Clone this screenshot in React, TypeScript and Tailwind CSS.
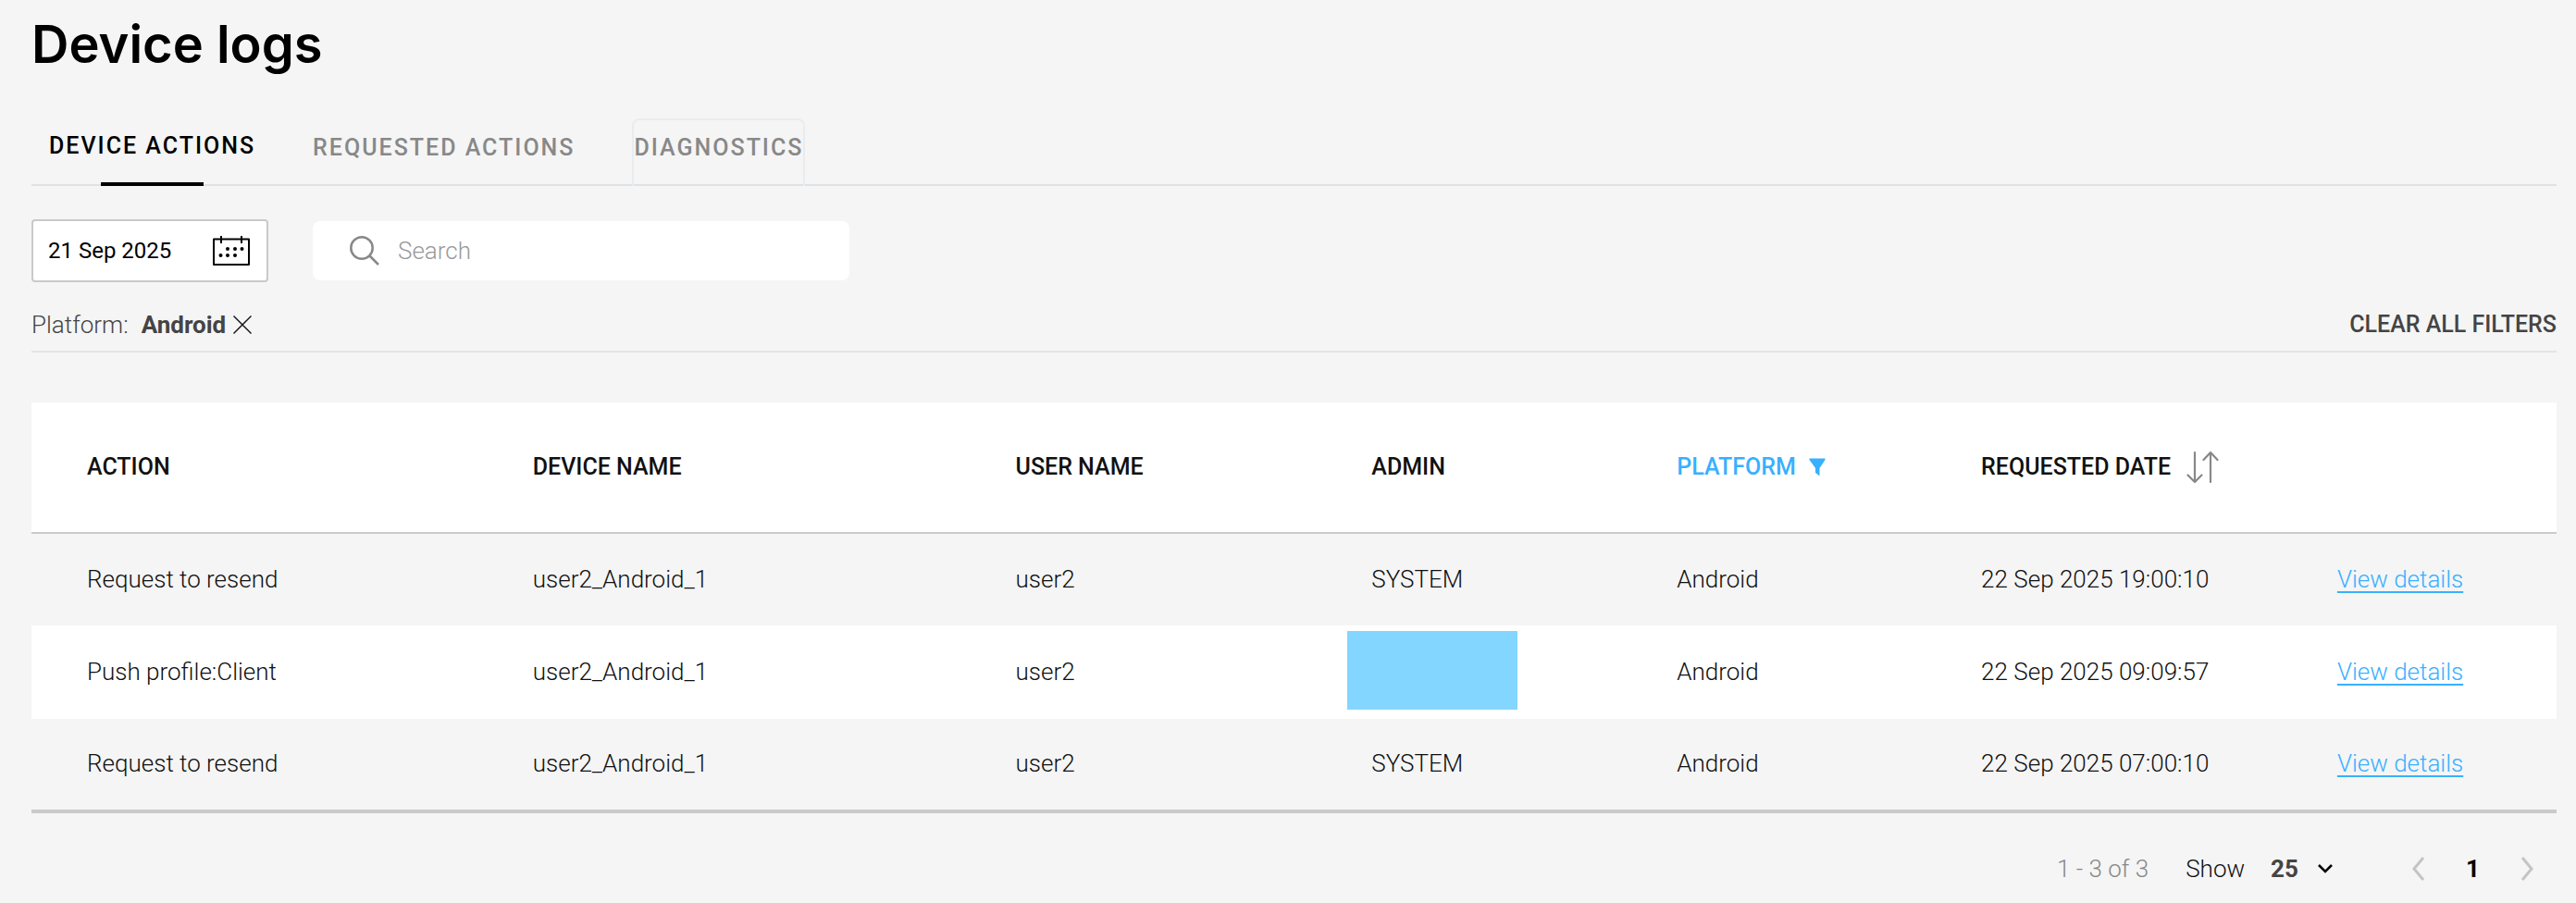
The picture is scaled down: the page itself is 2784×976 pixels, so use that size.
import { useState } from "react";

type Log = {
  action: string;
  device: string;
  user: string;
  admin: string | null;
  platform: string;
  date: string;
};

const tabs = ["DEVICE ACTIONS", "REQUESTED ACTIONS", "DIAGNOSTICS"];

const logs: Log[] = [
  { action: "Request to resend", device: "user2_Android_1", user: "user2", admin: "SYSTEM", platform: "Android", date: "22 Sep 2025 19:00:10" },
  { action: "Push profile:Client", device: "user2_Android_1", user: "user2", admin: null, platform: "Android", date: "22 Sep 2025 09:09:57" },
  { action: "Request to resend", device: "user2_Android_1", user: "user2", admin: "SYSTEM", platform: "Android", date: "22 Sep 2025 07:00:10" },
];

function CalendarIcon() {
  return (
    <svg width="40" height="32" viewBox="0 0 40 32" fill="none" stroke="#000" strokeWidth="2" aria-hidden="true">
      <path d="M1 3.500H39V31H1Z" strokeLinejoin="round" />
      <path d="M9 0V8M31 0V8" />
      <g fill="#000" stroke="none">
        <circle cx="16" cy="14" r="2" />
        <circle cx="24" cy="14" r="2" />
        <circle cx="31.500" cy="14" r="2" />
        <circle cx="8.500" cy="21" r="2" />
        <circle cx="16" cy="21" r="2" />
        <circle cx="24" cy="21" r="2" />
      </g>
    </svg>
  );
}

function SearchIcon() {
  return (
    <svg width="32" height="32" viewBox="0 0 32 32" fill="none" stroke="#888" strokeWidth="2.500" aria-hidden="true">
      <circle cx="13" cy="13" r="11.700" />
      <path d="M21.500 21.500L31 31" />
    </svg>
  );
}

function CloseIcon() {
  return (
    <svg width="20" height="20" viewBox="0 0 20 20" fill="none" stroke="#111" strokeWidth="1.400" aria-hidden="true">
      <path d="M0.500 0.500L19.500 19.500M19.500 0.500L0.500 19.500" />
    </svg>
  );
}

function FilterIcon() {
  return (
    <svg width="18" height="20" viewBox="0 0 18 20" fill="#38b0ff" aria-hidden="true">
      <path d="M0.500 0.500H17.500V2L11.500 11V19.500L7 16V11L0.500 2Z" />
    </svg>
  );
}

function SortIcon() {
  return (
    <svg width="36" height="36" viewBox="0 0 36 36" fill="none" stroke="#888" strokeWidth="2.200" strokeLinecap="round" strokeLinejoin="round" aria-hidden="true">
      <path d="M10 2V34M2.500 26.500L10 34L17.500 26.500" />
      <path d="M27 34V2M19.500 10L27 2L34.500 10" />
    </svg>
  );
}

export default function App() {
  const [tab, setTab] = useState(0);
  return (
    <main className="min-h-screen bg-[#f5f5f5] pt-2 pr-[21px] pb-4 pl-[34px] font-[Roboto,sans-serif] text-[26px] leading-8 font-light text-[#111]">
      <h1 className="font-[Inter,sans-serif] text-[56px] leading-20 font-semibold text-black">Device logs</h1>

      <div role="tablist" className="mt-10 flex h-[73px] gap-[62px] border-b-2 border-[#dee2e6] pl-[19px]">
        {tabs.map((name, i) => (
          <button
            key={name}
            role="tab"
            aria-selected={i === tab}
            onClick={() => setTab(i)}
            className={
              i === tab
                ? "relative -mb-0.5 pb-3.5 text-[25px] font-medium tracking-[2px] text-black after:absolute after:bottom-0 after:left-1/4 after:h-1 after:w-1/2 after:bg-black"
                : i === 2
                  ? "-mb-0.5 rounded-t-lg border-2 border-b-0 border-[#e9ecef] pb-3 text-[25px] font-medium tracking-[2px] text-[#888]"
                  : "-mb-0.5 pb-2.5 text-[25px] font-medium tracking-[2px] text-[#888]"
            }
          >
            {name}
          </button>
        ))}
      </div>

      <div className="mt-9 flex items-center gap-12">
        <button aria-label="Date, 21 Sep 2025" className="flex h-17 w-64 items-center justify-between rounded border-2 border-[#c9c9c9] bg-white pr-[18px] pl-4 text-2xl font-normal text-black">
          <span>21 Sep 2025</span>
          <CalendarIcon />
        </button>
        <label className="flex h-16 w-[580px] items-center gap-5 rounded-lg bg-white pl-10">
          <SearchIcon />
          <input type="search" aria-label="Search" placeholder="Search" className="min-w-0 flex-1 bg-transparent outline-none placeholder:text-[#999]" />
        </label>
      </div>

      <div className="mt-6 flex h-13 items-start justify-between border-b-2 border-[#e4e4e4] pt-1.5 text-[#444]">
        <div className="flex items-center">
          <span>Platform:</span>
          <span className="ml-3.5 font-bold">Android</span>
          <button aria-label="Remove Android filter" className="ml-2">
            <CloseIcon />
          </button>
        </div>
        <button className="text-[25px] font-medium">CLEAR ALL FILTERS</button>
      </div>

      <table className="mt-[54px] w-full table-fixed border-collapse border-b-4 border-[#cacaca] text-left">
        <colgroup>
          <col className="w-[18.9%]" />
          <col className="w-[19.12%]" />
          <col className="w-[14.1%]" />
          <col className="w-[12.09%]" />
          <col className="w-[12.05%]" />
          <col className="w-[14.1%]" />
          <col className="w-[9.64%]" />
        </colgroup>
        <thead className="border-b-2 border-[#cacaca] bg-white text-[25px]">
          <tr className="h-[141px]">
            <th className="pl-15 font-medium">ACTION</th>
            <th className="pl-[26px] font-medium">DEVICE NAME</th>
            <th className="pl-[26px] font-medium">USER NAME</th>
            <th className="pl-[26px] font-medium">ADMIN</th>
            <th className="pl-[26px] font-medium text-[#38b0ff]">
              <button className="flex items-center gap-3.5">
                PLATFORM
                <FilterIcon />
              </button>
            </th>
            <th className="pl-[26px] font-medium">
              <button className="flex items-center gap-4 whitespace-nowrap">
                REQUESTED DATE
                <SortIcon />
              </button>
            </th>
            <td />
          </tr>
        </thead>
        <tbody>
          {logs.map((log) => (
            <tr key={log.date} className="h-25 even:bg-white">
              <td className="pb-0.5 pl-15">{log.action}</td>
              <td className="pb-0.5 pl-[26px]">{log.device}</td>
              <td className="pb-0.5 pl-[26px]">{log.user}</td>
              {log.admin ? (
                <td className="pb-0.5 pl-[26px]">{log.admin}</td>
              ) : (
                <td className="pt-1.5 pb-2.5 align-top">
                  <div className="h-[85px] w-[184px] bg-[#82d6ff]" />
                </td>
              )}
              <td className="pb-0.5 pl-[26px]">{log.platform}</td>
              <td className="pb-0.5 pl-[26px]">{log.date}</td>
              <td className="pb-0.5 pl-[26px]">
                <a href="#details" className="text-[#38b0ff] underline decoration-2 underline-offset-4">View details</a>
              </td>
            </tr>
          ))}
        </tbody>
      </table>

      <footer className="mt-11 flex items-center justify-end pr-6">
        <span className="text-[#888]">1 - 3 of 3</span>
        <label htmlFor="page-size" className="ml-10">Show</label>
        <div className="relative ml-7 flex items-center">
          <select id="page-size" defaultValue="25" className="w-17 appearance-none bg-transparent font-bold text-[#444]">
            <option>25</option>
            <option>50</option>
          </select>
          <svg className="pointer-events-none absolute right-0" width="18" height="12" viewBox="0 0 18 12" fill="none" stroke="#000" strokeWidth="2.500" aria-hidden="true">
            <path d="M2 2L9 9L16 2" />
          </svg>
        </div>
        <button aria-label="Previous page" className="ml-[84px]">
          <svg width="15" height="26" viewBox="0 0 15 26" fill="none" stroke="#c4c4c4" strokeWidth="3" aria-hidden="true">
            <path d="M13 1L3 13L13 25" />
          </svg>
        </button>
        <button className="mx-11 font-bold text-black" aria-current="page">1</button>
        <button aria-label="Next page">
          <svg width="15" height="26" viewBox="0 0 15 26" fill="none" stroke="#c4c4c4" strokeWidth="3" aria-hidden="true">
            <path d="M2 1L12 13L2 25" />
          </svg>
        </button>
      </footer>
    </main>
  );
}
